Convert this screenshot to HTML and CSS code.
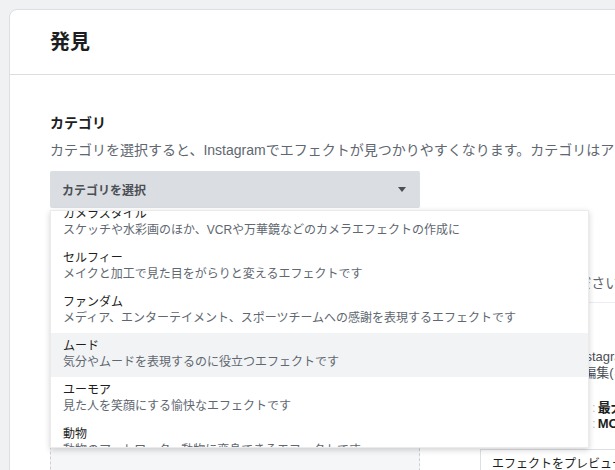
FILE: index.html
```html
<!DOCTYPE html>
<html lang="ja">
<head>
<meta charset="utf-8">
<title>発見</title>
<link rel="stylesheet" href="styles.css">
</head>
<body>
<div class="card">
  <header class="card-header"><h1 class="card-title">発見</h1></header>
  <div class="card-body">
    <section class="field">
      <h2 class="field-title">カテゴリ</h2>
      <p class="field-desc">カテゴリを選択すると、Instagramでエフェクトが見つかりやすくなります。カテゴリはアップロード後にも変更できます。</p>
      <div class="select-wrap">
        <div class="select"><span class="select-label">カテゴリを選択</span><span class="caret"></span></div>
        <div class="menu">
          <ul class="menu-list">
            <li class="menu-item"><div class="item-title">カメラスタイル</div><div class="item-desc">スケッチや水彩画のほか、VCRや万華鏡などのカメラエフェクトの作成に</div></li>
            <li class="menu-item"><div class="item-title">セルフィー</div><div class="item-desc">メイクと加工で見た目をがらりと変えるエフェクトです</div></li>
            <li class="menu-item"><div class="item-title">ファンダム</div><div class="item-desc">メディア、エンターテイメント、スポーツチームへの感謝を表現するエフェクトです</div></li>
            <li class="menu-item is-hover"><div class="item-title">ムード</div><div class="item-desc">気分やムードを表現するのに役立つエフェクトです</div></li>
            <li class="menu-item"><div class="item-title">ユーモア</div><div class="item-desc">見た人を笑顔にする愉快なエフェクトです</div></li>
            <li class="menu-item"><div class="item-title">動物</div><div class="item-desc">動物のアートワーク、動物に変身できるエフェクトです</div></li>
          </ul>
        </div>
      </div>
    </section>
    <section class="media">
      <div class="upload"></div>
      <div class="media-info">
        <p class="info-lead">画像を選んでください</p>
        <hr class="info-rule">
        <p class="info-line first">プレビュー用の Instagramアカウント</p>
        <p class="info-line">ユーザーネームを編集(ネットワーク)</p>
        <dl class="specs">
          <dt class="spec-label">ファイルサイズ</dt><dd class="spec-value"><span class="colon">:</span><b>最大4MB</b></dd>
          <dt class="spec-label">ファイル形式</dt><dd class="spec-value"><span class="colon">:</span><b>MOV、MP4</b></dd>
        </dl>
        <div class="preview-box">エフェクトをプレビュー</div>
      </div>
    </section>
  </div>
</div>
</body>
</html>
```
FILE: styles.css
```css
html, body {
  margin: 0;
  padding: 0;
}
body {
  background: #eff1f3;
  height: 470px;
  overflow: hidden;
  font-family: "Liberation Sans", "Noto Sans CJK JP", sans-serif;
  color: #1c1e21;
}
.card {
  margin: 9px 0 0 9px;
  width: 1000px;
  min-height: 700px;
  background: #fff;
  border: 1px solid #dddfe2;
  border-top-left-radius: 8px;
}
.card-header {
  height: 64px;
  display: flex;
  align-items: center;
  padding-left: 40px;
  border-bottom: 1px solid #dadde1;
}
.card-title {
  margin: 0;
  font-size: 20px;
  line-height: 24px;
  font-weight: 700;
}
.card-body {
  padding: 39px 0 0 40px;
}
.field-title {
  margin: 0;
  font-size: 14px;
  line-height: 18px;
  font-weight: 700;
}
.field-desc {
  margin: 9px 0 0;
  font-size: 14px;
  line-height: 18px;
  color: #606770;
  white-space: nowrap;
}
.select-wrap {
  position: relative;
  margin-top: 12px;
  width: 370px;
}
.select {
  height: 37px;
  box-sizing: border-box;
  padding: 0 14px 0 12px;
  display: flex;
  align-items: center;
  justify-content: space-between;
  background: #dadde1;
  border-radius: 2px;
}
.select-label {
  font-size: 12px;
  font-weight: 700;
  color: #4b4f56;
}
.caret {
  width: 0;
  height: 0;
  border-left: 4.5px solid transparent;
  border-right: 4.5px solid transparent;
  border-top: 5px solid #4b4f56;
}
.menu {
  position: absolute;
  z-index: 5;
  top: calc(100% + 2px);
  left: 0;
  width: 539px;
  height: 238px;
  box-sizing: border-box;
  overflow: hidden;
  background: #fff;
  border: 1px solid rgba(0, 0, 0, 0.08);
  box-shadow: 0 2px 6px rgba(0, 0, 0, 0.18);
}
.menu-list {
  list-style: none;
  margin: -10px 0 0;
  padding: 0;
}
.menu-item {
  padding: 5px 12px 7px;
  font-size: 12px;
  line-height: 16px;
}
.menu-item.is-hover {
  background: #f2f3f5;
}
.item-title {
  color: #1c1e21;
}
.item-desc {
  color: #606770;
  white-space: nowrap;
}
.media {
  margin-top: 32px;
  display: grid;
  grid-template-columns: 370px 1fr;
  column-gap: 60px;
}
.upload {
  height: 400px;
  box-sizing: border-box;
  border: 1px dashed #ccd0d5;
  background: #f5f6f7;
  border-radius: 2px;
}
.media-info {
  padding-top: 33px;
  white-space: nowrap;
}
.info-lead {
  margin: 0;
  font-size: 14px;
  line-height: 20px;
  color: #606770;
}
.info-rule {
  margin: 9px 0 0;
  border: 0;
  border-top: 1px solid #ebedf0;
}
.info-line {
  margin: 0;
  font-size: 13px;
  line-height: 16px;
  color: #4b4f56;
}
.info-line.first {
  margin-top: 46px;
}
.specs {
  margin: 19px 0 0;
  display: grid;
  grid-template-columns: 112px auto;
  font-size: 13px;
  line-height: 16px;
}
.spec-label {
  overflow: hidden;
  color: #606770;
}
.spec-value {
  margin: 0;
  color: #1c1e21;
}
.colon {
  color: #bec3c9;
  margin-right: 2px;
}
.preview-box {
  margin-top: 17px;
  border: 1px solid #dddfe2;
  padding: 5px 11px 4px;
  font-size: 12px;
  line-height: 18px;
  color: #1c1e21;
}
```
